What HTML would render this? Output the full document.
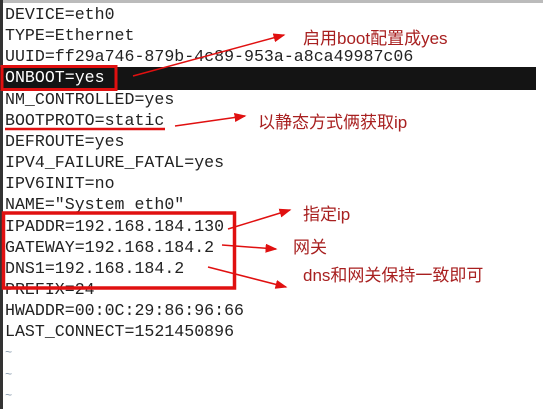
<!DOCTYPE html>
<html><head><meta charset="utf-8"><style>
html,body{margin:0;padding:0;}
body{width:543px;height:409px;background:#fff;position:relative;overflow:hidden;font-family:"Liberation Mono",monospace;}
.l{position:absolute;left:5px;font-size:16.6px;color:#222;white-space:pre;line-height:21px;}
.bar{position:absolute;left:0;top:67px;width:536px;height:23px;background:#141414;}
.ann{position:absolute;color:#a82020;font-family:"Liberation Sans","Noto Sans CJK SC",sans-serif;font-size:17px;white-space:nowrap;}
.tl{position:absolute;color:#8a9cae;font-size:12px;left:5px;}
</style></head><body>
<div style="position:absolute;left:0;top:0;width:543px;height:3px;background:#bbb"></div>
<div style="position:absolute;left:0;top:0;width:3px;height:409px;background:#333"></div>
<div class="bar"></div>
<div class="l" style="top:4px">DEVICE=eth0</div>
<div class="l" style="top:25px">TYPE=Ethernet</div>
<div class="l" style="top:46px">UUID=ff29a746-879b-4c89-953a-a8ca49987c06</div>
<div class="l" style="top:67px;color:#fff">ONBOOT=yes</div>
<div class="l" style="top:89px">NM_CONTROLLED=yes</div>
<div class="l" style="top:110px">BOOTPROTO=static</div>
<div class="l" style="top:131px">DEFROUTE=yes</div>
<div class="l" style="top:152px">IPV4_FAILURE_FATAL=yes</div>
<div class="l" style="top:173px">IPV6INIT=no</div>
<div class="l" style="top:194px">NAME="System eth0"</div>
<div class="l" style="top:216px">IPADDR=192.168.184.130</div>
<div class="l" style="top:237px">GATEWAY=192.168.184.2</div>
<div class="l" style="top:258px">DNS1=192.168.184.2</div>
<div class="l" style="top:279px">PREFIX=24</div>
<div class="l" style="top:300px">HWADDR=00:0C:29:86:96:66</div>
<div class="l" style="top:321px">LAST_CONNECT=1521450896</div>
<div class="tl" style="top:346px">~</div>
<div class="tl" style="top:368px">~</div>
<div class="tl" style="top:389px">~</div>
<div class="ann" style="left:303px;top:24px">启用boot配置成yes</div>
<div class="ann" style="left:258px;top:108px">以静态方式俩获取ip</div>
<div class="ann" style="left:303px;top:200px">指定ip</div>
<div class="ann" style="left:293px;top:233px">网关</div>
<div class="ann" style="left:303px;top:261px">dns和网关保持一致即可</div>
<svg width="543" height="409" style="position:absolute;left:0;top:0">
<defs><marker id="a" markerWidth="8" markerHeight="6" refX="7" refY="3" orient="auto" markerUnits="strokeWidth"><path d="M0,0 L8,3 L0,6 Z" fill="#e01010"/></marker></defs>
<rect x="2" y="66.5" width="114" height="23" fill="none" stroke="#e01010" stroke-width="3"/>
<rect x="3.5" y="213" width="231" height="75" fill="none" stroke="#e01010" stroke-width="3.5"/>
<line x1="5" y1="129" x2="165" y2="129" stroke="#e01010" stroke-width="2.5"/>
<g stroke="#e01010" stroke-width="1.5" fill="none" marker-end="url(#a)">
<line x1="133" y1="76" x2="284" y2="35"/>
<line x1="175" y1="126" x2="245" y2="116"/>
<line x1="228" y1="229" x2="290" y2="210"/>
<line x1="222" y1="245" x2="276" y2="249"/>
<line x1="208" y1="267" x2="286" y2="287"/>
</g>
</svg>
</body></html>
